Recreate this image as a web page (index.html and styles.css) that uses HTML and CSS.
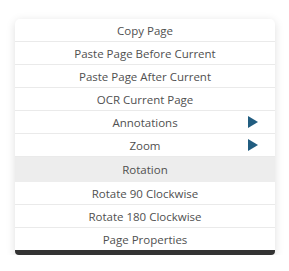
FILE: index.html
```
<!DOCTYPE html>
<html lang="en">
<head>
	<meta charset="UTF-8">
	<title>Page Menu</title>
	<link rel="stylesheet" href="styles.css">
</head>
<body>
<div class="menu">
	<div class="menu-item">Copy Page</div>
	<div class="menu-item">Paste Page Before Current</div>
	<div class="menu-item">Paste Page After Current</div>
	<div class="menu-item">OCR Current Page</div>
	<div class="menu-item has-sub">Annotations<span class="arrow"></span></div>
	<div class="menu-item has-sub">Zoom<span class="arrow"></span></div>
	<div class="menu-head">Rotation</div>
	<div class="menu-item">Rotate 90 Clockwise</div>
	<div class="menu-item">Rotate 180 Clockwise</div>
	<div class="menu-item last">Page Properties</div>
</div>
</body>
</html>
```
FILE: styles.css
```
*{
	margin: 0;
	padding: 0;
}
body{
	background: #fff;
	font-family: "Open Sans", "Liberation Sans", sans-serif;
	font-size: 11.5px;
	color: #505050;
	padding: 19px 14px 0 15px;
}
.menu{
	width: 260px;
	background: #fff;
	border-radius: 5px 5px 4px 4px;
	border-bottom: 5px solid #333;
	box-shadow: 0 2px 10px rgba(0, 0, 0, 0.13);
	overflow: hidden;
}
.menu-item{
	position: relative;
	height: 22px;
	line-height: 23px;
	text-align: center;
	border-bottom: 1px solid #eaeaea;
}
.menu-item.last{
	border-bottom: none;
}
.menu-head{
	height: 25px;
	line-height: 26px;
	text-align: center;
	background: #ededed;
}
.arrow{
	position: absolute;
	right: 17px;
	top: 5px;
	width: 0;
	height: 0;
	border-left: 10px solid #215d80;
	border-top: 6px solid transparent;
	border-bottom: 6px solid transparent;
}
```
